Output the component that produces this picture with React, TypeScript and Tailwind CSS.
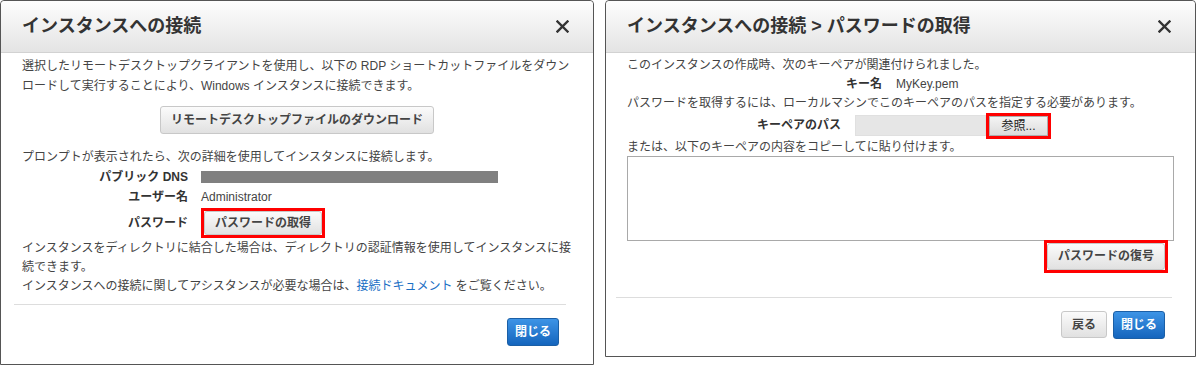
import React from "react";

const font = "font-['Liberation_Sans','Noto_Sans_CJK_JP',sans-serif]";

function CloseIcon() {
  return (
    <svg width="13" height="13" viewBox="0 0 13 13" className="text-[#333]">
      <path
        d="M1.5 1.5 L11.5 11.5 M11.5 1.5 L1.5 11.5"
        stroke="currentColor"
        strokeWidth="2.4"
        strokeLinecap="square"
      />
    </svg>
  );
}

function Header({ title }: { title: string }) {
  return (
    <div className="h-[52px] shrink-0 flex items-center justify-between pl-[21px] pr-[24px] bg-gradient-to-b from-[#fdfdfd] to-[#e4e4e4] border-b border-[#d2d2d2] rounded-t-[4px]">
      <h2 className="text-[18px] font-bold text-[#333]">{title}</h2>
      <CloseIcon />
    </div>
  );
}

function GreyButton({ label, className = "" }: { label: string; className?: string }) {
  return (
    <button
      type="button"
      className={`px-[10px] border border-[#c8c8c8] rounded-[3px] bg-gradient-to-b from-[#fbfbfb] to-[#e1e1e1] text-[12px] font-bold text-[#444] whitespace-nowrap ${className}`}
    >
      {label}
    </button>
  );
}

function RedBox({ children }: { children: React.ReactNode }) {
  return <div className="border-[3px] border-[#f00] flex">{children}</div>;
}

function BlueButton({ label }: { label: string }) {
  return (
    <button
      type="button"
      className="h-[28px] px-[7px] rounded-[3px] border border-[#1b5fa6] bg-gradient-to-b from-[#3d94e6] to-[#1465bd] text-white text-[12px] font-bold"
    >
      {label}
    </button>
  );
}

function ConnectDialog() {
  return (
    <div className="w-[594px] h-[365px] shrink-0 flex flex-col bg-white border border-[#555] rounded-t-[4px]">
      <Header title="インスタンスへの接続" />
      <div className="px-[21px] pt-[3px] text-[12px] leading-[20px] text-[#444] whitespace-nowrap">
        <p>
          選択したリモートデスクトップクライアントを使用し、以下の RDP ショートカットファイルをダウン
          <br />
          ロードして実行することにより、Windows インスタンスに接続できます。
        </p>
        <div className="flex justify-center mt-[10px]">
          <GreyButton label="リモートデスクトップファイルのダウンロード" className="h-[28px] px-[9px]" />
        </div>
        <p className="mt-[13px]">プロンプトが表示されたら、次の詳細を使用してインスタンスに接続します。</p>
        <div className="grid grid-cols-[166px_1fr] gap-x-[13px]">
          <span className="text-right font-bold text-[#333] h-[20px]">パブリック DNS</span>
          <div className="flex items-center">
            <div className="w-[297px] h-[12px] bg-[#808080]" />
          </div>
          <span className="text-right font-bold text-[#333] h-[21px] leading-[21px]">ユーザー名</span>
          <span className="leading-[21px]">Administrator</span>
          <span className="text-right font-bold text-[#333] leading-[30px]">パスワード</span>
          <div className="flex">
            <RedBox>
              <GreyButton label="パスワードの取得" className="h-[24px] px-[9px]" />
            </RedBox>
          </div>
        </div>
        <p className="leading-[19px] pt-[1px]">
          インスタンスをディレクトリに結合した場合は、ディレクトリの認証情報を使用してインスタンスに接
          <br />
          続できます。
          <br />
          インスタンスへの接続に関してアシスタンスが必要な場合は、
          <a href="#" className="text-[#1a6fc4]">
            接続ドキュメント
          </a>{" "}
          をご覧ください。
        </p>
      </div>
      <div className="ml-[13px] mr-[27px] mt-[8px] border-t border-[#ddd]" />
      <div className="flex justify-end mr-[34px] mt-[13px]">
        <BlueButton label="閉じる" />
      </div>
    </div>
  );
}

function PasswordDialog() {
  return (
    <div className="w-[591px] h-[357px] shrink-0 flex flex-col bg-white border border-[#555] rounded-t-[4px]">
      <Header title="インスタンスへの接続 > パスワードの取得" />
      <div className="px-[21px] pt-[3px] text-[12px] leading-[19px] text-[#444] whitespace-nowrap">
        <p>このインスタンスの作成時、次のキーペアが関連付けられました。</p>
        <div className="flex">
          <span className="w-[255px] text-right font-bold text-[#333]">キー名</span>
          <span className="ml-[14px]">MyKey.pem</span>
        </div>
        <p>パスワードを取得するには、ローカルマシンでこのキーペアのパスを指定する必要があります。</p>
        <div className="flex items-center h-[25px]">
          <span className="w-[214px] text-right font-bold text-[#333]">キーペアのパス</span>
          <div className="ml-[14px] w-[131px] h-[21px] bg-[#e6e6e6] border border-[#e0e0e0]" />
          <RedBox>
            <button
              type="button"
              className="h-[20px] w-[59px] border border-[#adadad] bg-gradient-to-b from-[#f4f4f4] to-[#dcdcdc] text-[12px] text-[#222]"
            >
              参照...
            </button>
          </RedBox>
        </div>
        <p className="leading-[18px]">または、以下のキーペアの内容をコピーしてに貼り付けます。</p>
        <textarea className="block w-full h-[85px] border border-[#a9a9a9] resize-none outline-none" />
        <div className="flex justify-end mr-[6px] -mt-[1px]">
          <RedBox>
            <GreyButton label="パスワードの復号" className="h-[27px] px-[10px]" />
          </RedBox>
        </div>
      </div>
      <div className="ml-[10px] mr-[23px] mt-[24px] border-t border-[#ddd]" />
      <div className="flex justify-end gap-[6px] mr-[30px] mt-[13px]">
        <GreyButton label="戻る" className="h-[27px] px-[6px]" />
        <BlueButton label="閉じる" />
      </div>
    </div>
  );
}

export default function App() {
  return (
    <div className={`w-[1200px] h-[365px] bg-white flex items-start gap-[11px] ${font}`}>
      <ConnectDialog />
      <PasswordDialog />
    </div>
  );
}
